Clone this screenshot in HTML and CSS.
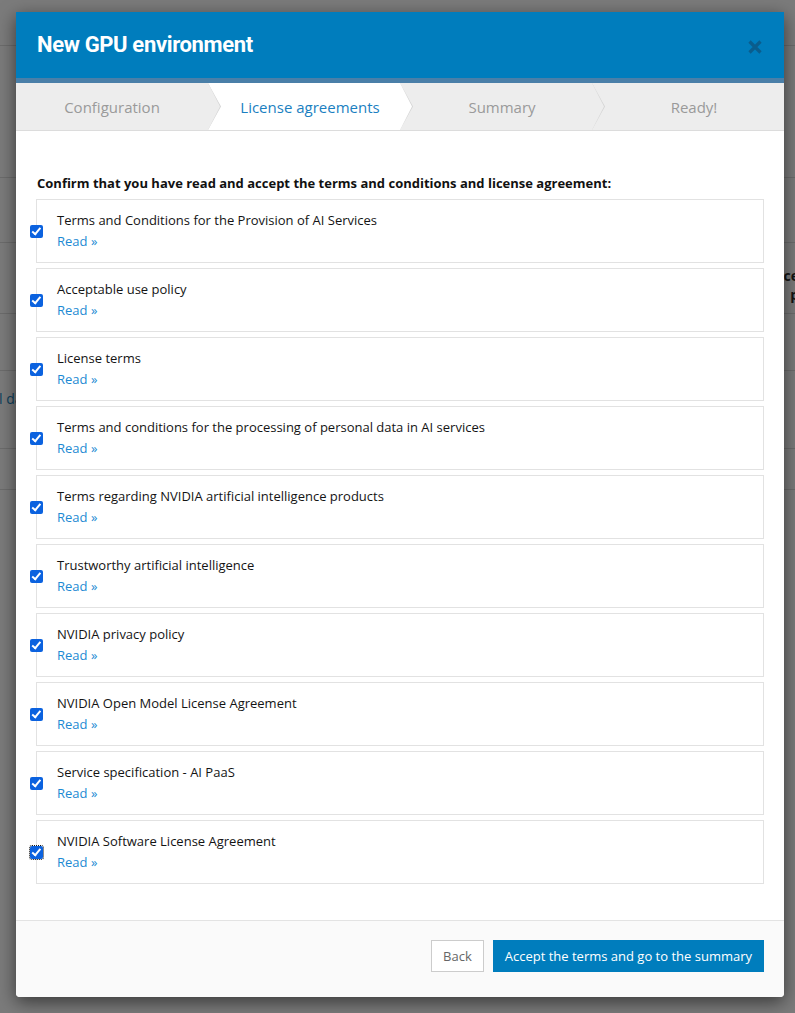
FILE: index.html
```html
<!DOCTYPE html>
<html lang="en">
<head>
<meta charset="utf-8">
<title>New GPU environment</title>
<link rel="stylesheet" href="styles.css">
</head>
<body>
<div class="page">
  <div class="bg-row r1"></div>
  <div class="bg-row r2"></div>
  <div class="bg-row r3"></div>
  <div class="bg-row r4"><span class="bg-right">ce<br>p</span></div>
  <div class="bg-row r5"></div>
  <div class="bg-row r6"><span class="bg-left">l da</span></div>
  <div class="bg-row r7"></div>
</div>

<div class="modal">
  <div class="modal-header">
    <h1 class="modal-title">New GPU environment</h1>
    <span class="close" aria-label="Close">
      <svg width="14" height="14" viewBox="0 0 14 14"><path d="M1.5 1.5L12.5 12.5M12.5 1.5L1.5 12.5" stroke="#0a5d8d" stroke-width="3.2" fill="none"/></svg>
    </span>
  </div>
  <div class="header-strip"></div>
  <div class="steps">
    <div class="step first">Configuration</div>
    <div class="step active">License agreements</div>
    <div class="step">Summary</div>
    <div class="step last">Ready!</div>
  </div>
  <div class="modal-body">
    <p class="intro">Confirm that you have read and accept the terms and conditions and license agreement:</p>
    <div class="list">
      <label class="item"><input type="checkbox" checked><span class="card"><span class="card-title">Terms and Conditions for the Provision of AI Services</span><a class="read">Read »</a></span></label>
      <label class="item"><input type="checkbox" checked><span class="card"><span class="card-title">Acceptable use policy</span><a class="read">Read »</a></span></label>
      <label class="item"><input type="checkbox" checked><span class="card"><span class="card-title">License terms</span><a class="read">Read »</a></span></label>
      <label class="item"><input type="checkbox" checked><span class="card"><span class="card-title">Terms and conditions for the processing of personal data in AI services</span><a class="read">Read »</a></span></label>
      <label class="item"><input type="checkbox" checked><span class="card"><span class="card-title">Terms regarding NVIDIA artificial intelligence products</span><a class="read">Read »</a></span></label>
      <label class="item"><input type="checkbox" checked><span class="card"><span class="card-title">Trustworthy artificial intelligence</span><a class="read">Read »</a></span></label>
      <label class="item"><input type="checkbox" checked><span class="card"><span class="card-title">NVIDIA privacy policy</span><a class="read">Read »</a></span></label>
      <label class="item"><input type="checkbox" checked><span class="card"><span class="card-title">NVIDIA Open Model License Agreement</span><a class="read">Read »</a></span></label>
      <label class="item"><input type="checkbox" checked><span class="card"><span class="card-title">Service specification - AI PaaS</span><a class="read">Read »</a></span></label>
      <label class="item"><input type="checkbox" class="focused" checked><span class="card"><span class="card-title">NVIDIA Software License Agreement</span><a class="read">Read »</a></span></label>
    </div>
  </div>
  <div class="modal-footer">
    <button class="btn btn-default">Back</button>
    <button class="btn btn-primary">Accept the terms and go to the summary</button>
  </div>
</div>
</body>
</html>
```

FILE: styles.css
```css
html, body {
  margin: 0;
  padding: 0;
}
body {
  background: #7b7b7b;
  font-family: "Open Sans", "Noto Sans", sans-serif;
  width: 795px;
  height: 1013px;
  overflow: hidden;
  position: relative;
}
.page {
  display: flex;
  flex-direction: column;
}
.bg-row {
  border-bottom: 1px solid #6c6c6c;
  font-size: 14px;
}
.r1 { height: 45px; }
.r2 { height: 131px; }
.r3 { height: 64px; }
.r4 { height: 70px; }
.r5 { height: 56px; }
.r6 { height: 77px; }
.r7 { height: 40px; }
.bg-right {
  display: block;
  text-align: right;
  margin-right: -4px;
  padding-top: 23px;
  font-weight: 700;
  line-height: 19px;
  color: #141414;
}
.bg-left {
  display: block;
  margin-left: -1px;
  padding-top: 18px;
  color: #0b3f5c;
}

.modal {
  position: absolute;
  top: 12px;
  left: 16px;
  width: 768px;
  background: #fff;
  border-radius: 0 0 4px 4px;
  box-shadow: 0 5px 18px rgba(0, 0, 0, 0.55);
  overflow: hidden;
}
.modal-header {
  background: #007dbd;
  height: 66px;
  display: flex;
  align-items: center;
  justify-content: space-between;
  padding: 0 22px 0 21px;
}
.modal-title {
  margin: 0;
  color: #fff;
  font-family: Roboto, "Open Sans", sans-serif;
  font-weight: 700;
  font-size: 22px;
  letter-spacing: -0.35px;
  padding-bottom: 2px;
}
.close {
  display: flex;
  width: 14px;
  height: 14px;
  margin-top: 4px;
}
.header-strip {
  height: 5px;
  background: #4a7fa8;
}
.steps {
  display: flex;
  height: 47px;
  background: #ededed;
  border-bottom: 1px solid #dcdcdc;
}
.step {
  box-sizing: border-box;
  width: 25%;
  flex: none;
  position: relative;
  display: flex;
  align-items: center;
  justify-content: center;
  padding-left: 12px;
  font-size: 15px;
  color: #9a9a9a;
  background: #ededed;
}
.step.first { padding-left: 0; }
.step.active {
  background: #fff;
  color: #1b7fc1;
}
.step::before,
.step::after {
  content: "";
  position: absolute;
  top: 0;
  height: 47px;
  clip-path: polygon(0 0, 100% 50%, 0 100%);
  z-index: 2;
}
.step::before {
  right: -13px;
  width: 13px;
  background: #d4d4d4;
}
.step::after {
  right: -12px;
  width: 12px;
  background: #ededed;
}
.step.active::after { background: #fff; }
.step.last::before,
.step.last::after { display: none; }

.modal-body {
  padding: 43px 20px 36px;
}
.intro {
  margin: 0 0 7px 1px;
  font-weight: 700;
  font-size: 13px;
  line-height: 18px;
  color: #111;
}
.list {
  display: flex;
  flex-direction: column;
  gap: 5px;
}
.item {
  display: flex;
  align-items: center;
  margin-left: -6px;
}
.item input {
  appearance: none;
  -webkit-appearance: none;
  margin: 0;
  width: 13px;
  height: 13px;
  border-radius: 2px;
  background: #0b62df;
  position: relative;
  z-index: 1;
  flex: none;
}
.item input::after {
  content: "";
  position: absolute;
  left: 4px;
  top: 1.5px;
  width: 3px;
  height: 6.5px;
  border: solid #fff;
  border-width: 0 2px 2px 0;
  transform: rotate(40deg);
}
.item input.focused {
  outline: 1px dotted #1a1a1a;
  outline-offset: 0;
}
.card {
  flex: 1;
  margin-left: -7px;
  border: 1px solid #e2e2e2;
  padding: 10px 20px;
  height: 42px;
  display: flex;
  flex-direction: column;
  justify-content: center;
  font-size: 13px;
  line-height: 21px;
}
.card-title {
  color: #141414;
}
.read {
  color: #1d8ad3;
  cursor: pointer;
}

.modal-footer {
  border-top: 1px solid #e3e3e3;
  background: #fafafa;
  display: flex;
  justify-content: flex-end;
  gap: 9px;
  padding: 19px 20px 25px;
}
.btn {
  font-family: "Open Sans", "Noto Sans", sans-serif;
  font-size: 13px;
  height: 32px;
  padding: 0 11px;
  border-radius: 0;
  cursor: pointer;
}
.btn-default {
  background: #fff;
  border: 1px solid #cccccc;
  color: #666;
}
.btn-primary {
  background: #007dbd;
  border: 1px solid #007dbd;
  color: #fff;
}
```
